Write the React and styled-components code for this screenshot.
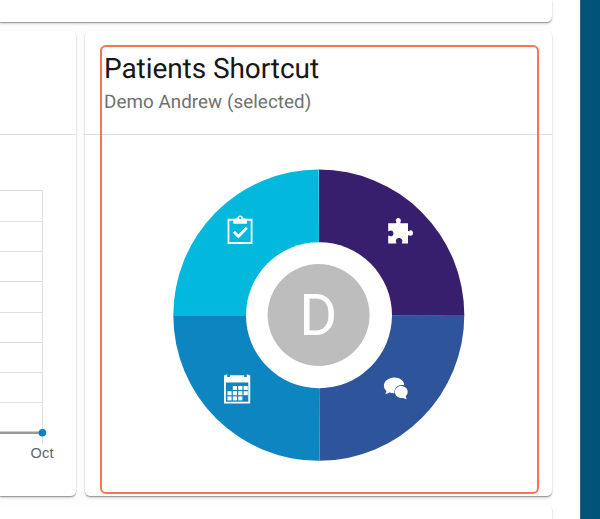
import React from "react";
import styled, { createGlobalStyle } from "styled-components";

const GlobalStyle = createGlobalStyle`
  * { box-sizing: border-box; }
  body { margin: 0; overflow: hidden; background: #fff; font-family: Roboto, sans-serif; }
`;

const Page = styled.div`
  display: grid;
  grid-template-columns: 552px 20px;
  justify-content: space-between;
  width: 600px;
  height: 519px;
  overflow: hidden;
`;

const Board = styled.main`
  display: grid;
  grid-template-rows: 22px 465px 30px;
  row-gap: 9px;
  height: 535px;
  background: #fdfdfd;
`;

const SideBar = styled.aside`
  background: #02527a;
  border-left: 1px solid #2b6288;
`;

const Card = styled.section`
  background: #fff;
  border-radius: ${(p) => p.$corners || "5px"};
  box-shadow: 0 1px 1px rgba(0, 0, 0, 0.32), 0 2px 3px rgba(0, 0, 0, 0.14);
`;

const CardRow = styled.div`
  display: grid;
  grid-template-columns: 76px 467px;
  column-gap: 9px;
`;

const CardHeader = styled.header`
  height: 104px;
  padding: 21px 19px 0;
  border-bottom: 1px solid #dfdfdf;
`;

const Title = styled.h2`
  margin: 0;
  color: #171717;
  font-size: 28px;
  font-weight: 400;
  line-height: 34px;
  white-space: nowrap;
  letter-spacing: -0.07px;
  text-rendering: geometricPrecision;
`;

const Subtitle = styled.p`
  margin: 5px 0 0;
  color: #707070;
  font-size: 18.8px;
  line-height: 22px;
  white-space: nowrap;
  letter-spacing: 0.06px;
  text-rendering: geometricPrecision;
`;

const Chart = styled.svg`
  display: block;
  width: 76px;
  height: 361px;
`;

const AxisLabel = styled.text`
  fill: #666;
  font-family: "Liberation Sans", Arial, sans-serif;
  font-size: 14.5px;
  letter-spacing: 0.3px;
`;

const Wheel = styled.svg`
  display: block;
  width: 292px;
  height: 292px;
  margin: 34px 0 0 88px;
`;

const Initial = styled.text`
  fill: #fff;
  font-family: Roboto, sans-serif;
  font-size: 58px;
  font-weight: 400;
  text-anchor: middle;
`;

const Highlight = styled.div`
  position: absolute;
  left: 100px;
  top: 45px;
  width: 439px;
  height: 449px;
  border: 2px solid #f9744a;
  border-radius: 6px;
  pointer-events: none;
`;

const gridLines = [56, 87, 117, 147, 178, 208, 238, 268];

function ActivityChart() {
  return (
    <Chart viewBox="0 0 76 361">
      {gridLines.map((y) => (
        <path key={y} d={`M0 ${y - 0.5}H43`} stroke="#dedede" />
      ))}
      <path d="M42.5 55V309" stroke="#dedede" />
      <path d="M0 297.8H42" stroke="#999" strokeWidth="2.4" />
      <circle cx="42.4" cy="297.8" r="3.8" fill="#0c83c0" />
      <AxisLabel x="30.4" y="322.5">Oct</AxisLabel>
    </Chart>
  );
}

function TaskIcon() {
  return (
    <g>
      <path fillRule="evenodd" fill="#fff" d="M227.6 218.7h7.6v-.4h2.2c.2-1.7 1.1-2.9 2.8-2.9s2.6 1.2 2.8 2.9h2.2v.4h7.3v25.2h-24.9zM229.4 220.7v21.4h21.3v-21.4h-3.8v3h-13.6v-3zM240.2 217.1a1.1 1.1 0 1 0 0 2.2 1.1 1.1 0 0 0 0-2.2z" />
      <path fill="none" stroke="#fff" strokeWidth="2.9" d="m233.9 231.7 4.5 4.7 8.4-8.7" />
    </g>
  );
}

function PuzzleIcon() {
  return (
    <path fill="#fff" d="M388.2 223.2h7.8c.8 0 .2-1.1-.1-2.1-.5-1.9.8-3.2 2.4-3.2s3 1.3 2.5 3.2c-.3 1-.9 2.1-.1 2.1h7.3v7.2c0 1 1 .5 1.8 0 1.8-.8 3.2.5 3.2 2.6s-1.5 3.3-3.2 2.6c-.8-.4-1.8-.8-1.8.2v7.7h-5.6c-.9 0-.4-1-.1-1.9.5-1.8-1.4-3.5-3.3-3.5s-3.6 1.7-3.1 3.5c.3.9.9 1.9 0 1.9h-7.7v-7.4c0-1 .9-.4 1.8 0 1.8.7 3.4-.7 3.4-2.7s-1.6-3.4-3.4-2.7c-.9.4-1.8.9-1.8 0z" />
  );
}

const dayCells = [
  [232.8, 386], [238.2, 386], [243.6, 386],
  [227.4, 391.2], [232.8, 391.2], [238.2, 391.2], [243.6, 391.2],
  [227.4, 396.4], [232.8, 396.4], [238.2, 396.4],
];

function CalendarIcon() {
  return (
    <g fill="#fff">
      <path fillRule="evenodd" d="M224 375.3h1.5v-.8h1.8v2.6h2.6v-1.8h14.2v1.8h2.6v-2.6h1.8v.8h1.7v28.1H224zM225.9 382.4v19.3h22.4v-19.3z" />
      {dayCells.map(([x, y]) => (
        <rect key={`${x}-${y}`} x={x} y={y} width="4.2" height="4" />
      ))}
    </g>
  );
}

function ChatIcon() {
  return (
    <g fill="#fff">
      <path d="M394.2 377.6c5.6 0 9.9 3.3 10 7.5-6-.8-10.6 2.9-9.6 8.1-1.8.1-3.6-.2-5-.7-1.3.9-2.7 1.3-4.5 1.2 1-1 1.4-2 1.2-3-1.5-1.2-2.4-2.9-2.4-4.9 0-4.6 4.6-8.2 10.3-8.2z" />
      <path d="M401.2 386c3.6 0 6.5 2.6 6.5 5.8 0 1.9-.8 3.4-2 4.4.1 1 .5 1.8 1.1 2.7-1.2.1-2.5-.3-3.5-1-4.3.9-8.4-1.8-8.4-6.1 0-3.2 2.8-5.8 6.3-5.8z" />
    </g>
  );
}

function ShortcutWheel() {
  return (
    <Wheel viewBox="173 169 292 292">
      <path d="M319 315.5V169.5A145.5 145.5 0 0 1 464.3 315z" fill="#371f6e" />
      <path d="M319 315.3 464.3 315A145.5 145.5 0 0 1 319.5 460.8z" fill="#2e549b" />
      <path d="M319 315.5 319.5 460.8A145.5 145.5 0 0 1 173.3 315.5z" fill="#0d85c0" />
      <path d="M319.1 316 173.3 316A145.7 145.7 0 0 1 318.7 169.5z" fill="#02b8dc" />
      <circle cx="319" cy="315.2" r="73" fill="#fff" />
      <circle cx="318.6" cy="315" r="51" fill="#bdbdbd" />
      <Initial x="318.3" y="335">D</Initial>
      <TaskIcon />
      <PuzzleIcon />
      <CalendarIcon />
      <ChatIcon />
    </Wheel>
  );
}

export default function App() {
  return (
    <>
      <GlobalStyle />
      <Page>
        <Board>
          <Card $corners="0 0 5px 0" />
          <CardRow>
            <Card $corners="0 5px 5px 0">
              <CardHeader />
              <ActivityChart />
            </Card>
            <Card>
              <CardHeader>
                <Title>Patients Shortcut</Title>
                <Subtitle>Demo Andrew (selected)</Subtitle>
              </CardHeader>
              <ShortcutWheel />
            </Card>
          </CardRow>
          <Card $corners="0 5px 0 0" />
        </Board>
        <SideBar />
      </Page>
      <Highlight />
    </>
  );
}
